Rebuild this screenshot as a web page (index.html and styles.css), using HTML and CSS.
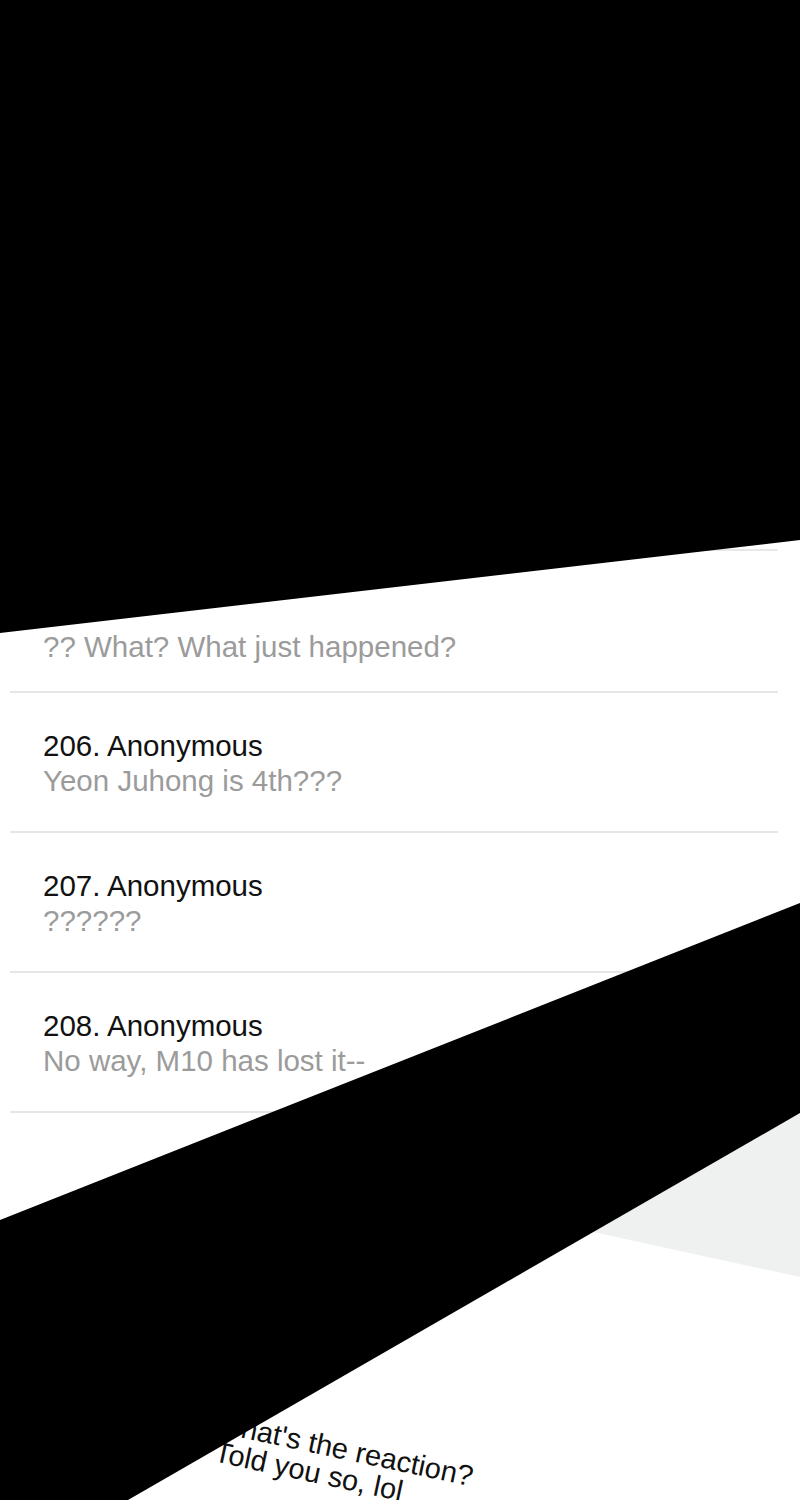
FILE: index.html
```html
<!DOCTYPE html>
<html lang="en">
<head>
    <meta charset="UTF-8">
    <meta name="viewport" content="width=device-width, initial-scale=1.0">
    <title>Board thread</title>
    <link rel="stylesheet" href="styles.css">
</head>
<body>
    <div class="panel">
        <ul class="thread">
            <li class="post post--cut">
                <p class="post-body">?? What? What just happened?</p>
            </li>
            <li class="post">
                <p class="post-head">206. Anonymous</p>
                <p class="post-body">Yeon Juhong is 4th???</p>
            </li>
            <li class="post">
                <p class="post-head">207. Anonymous</p>
                <p class="post-body">??????</p>
            </li>
            <li class="post">
                <p class="post-head">208. Anonymous</p>
                <p class="post-body">No way, M10 has lost it--</p>
            </li>
        </ul>

        <!-- speech text, tilted, sits under the black band -->
        <div class="bubble">
            <span class="bubble-line">What's the reaction?</span>
            <span class="bubble-line bubble-line--in">Told you so, lol</span>
        </div>

        <svg class="shade" viewBox="0 0 800 1500" width="800" height="1500">
            <polygon class="shade-grey" points="800,1113 593,1232 800,1277"/>
            <polygon class="shade-black" points="0,0 800,0 800,540 0,633"/>
            <polygon class="shade-black" points="800,903 800,1113 128,1500 0,1500 0,1220"/>
        </svg>
    </div>
</body>
</html>
```

FILE: styles.css
```css
body { margin: 0; background: #fff; font-family: "Liberation Sans", Arial, sans-serif; }
.panel { position: relative; width: 800px; height: 1500px; overflow: hidden; background: #fff; }

.thread { list-style: none; margin: 549px 0 0 10px; padding: 0; width: 768px; border-top: 2px solid #e8e8e8; }
.post { padding: 35px 0 33px 33px; border-bottom: 2px solid #e6e6e6; }
.post--cut { padding-top: 78px; padding-bottom: 27px; }
.post p { margin: 0; font-size: 29.5px; line-height: 35px; white-space: nowrap; }
.post-head { color: #111; }
.post-body { color: #9b9b9b; }

.bubble { position: absolute; left: 218px; top: 1408px; transform: rotate(12deg); transform-origin: 0 0; font-size: 29px; line-height: 29px; color: #111; }
.bubble-line { display: block; white-space: nowrap; }
.bubble-line--in { padding-left: 6px; }

.shade { position: absolute; left: 0; top: 0; pointer-events: none; }
.shade-black { fill: #000; }
.shade-grey { fill: #eef1f0; }
```
